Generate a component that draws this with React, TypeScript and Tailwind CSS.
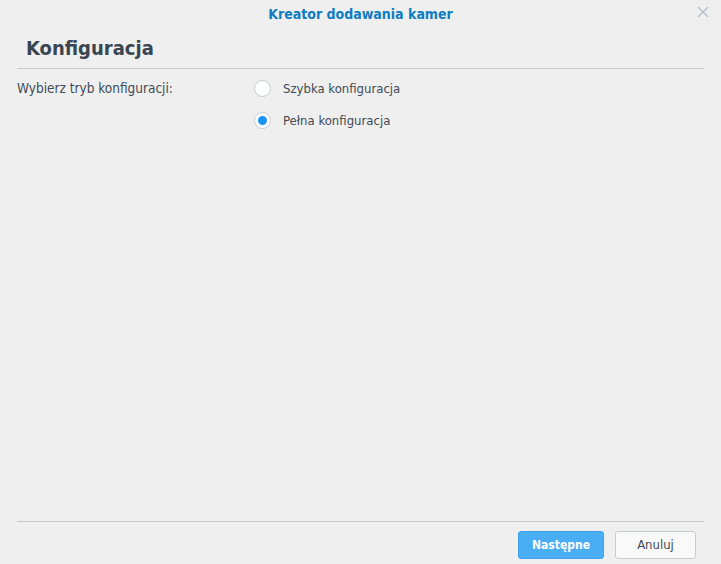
import React from "react";

export default function App() {
  const font = { fontFamily: '"DejaVu Sans Condensed", "DejaVu Sans", sans-serif' };
  return (
    <div className="w-[721px] h-[564px] bg-[#efefef] flex flex-col text-[#414b55]" style={font}>
      <div className="relative h-[27px] flex items-center justify-center">
        <span className="text-[14px] font-bold text-[#0d7cc1] mt-[1px]">Kreator dodawania kamer</span>
        <svg className="absolute right-[12px] top-[6px]" width="12" height="12" viewBox="0 0 12 12">
          <path d="M1 1 L11 11 M11 1 L1 11" stroke="#b5bcc4" strokeWidth="1.4" />
        </svg>
      </div>
      <div className="mx-[17px] border-b border-[#c8c8c8] h-[42px] flex items-center pl-[9px]">
        <span className="text-[20px] font-bold text-[#3a4552]">Konfiguracja</span>
      </div>
      <div className="flex-1 mx-[17px] flex pt-[10px]">
        <div className="w-[237px] text-[13.5px] leading-[18px]">Wybierz tryb konfiguracji:</div>
        <div className="flex flex-col gap-[13px]">
          <label className="flex items-center gap-[12px] h-[19px] text-[13px]">
            <span className="w-[17px] h-[17px] rounded-full bg-white border border-[#c6cbd1]" />
            Szybka konfiguracja
          </label>
          <label className="flex items-center gap-[12px] h-[19px] text-[13px]">
            <span className="w-[17px] h-[17px] rounded-full bg-white border border-[#c6cbd1] flex items-center justify-center">
              <span className="w-[9px] h-[9px] rounded-full bg-[#1a94f5]" />
            </span>
            Pełna konfiguracja
          </label>
        </div>
      </div>
      <div className="mx-[17px] border-t border-[#c8c8c8] h-[43px] flex items-start justify-end pt-[9px] pr-[8px] gap-[11px]">
        <button className="w-[86px] h-[28px] rounded-[3px] bg-[#4aaef5] border border-[#3ea3ec] text-white text-[12px] font-bold">Następne</button>
        <button className="w-[81px] h-[28px] rounded-[3px] bg-[#f9f9f9] border border-[#c6cbd1] text-[#414b55] text-[13px]">Anuluj</button>
      </div>
    </div>
  );
}
